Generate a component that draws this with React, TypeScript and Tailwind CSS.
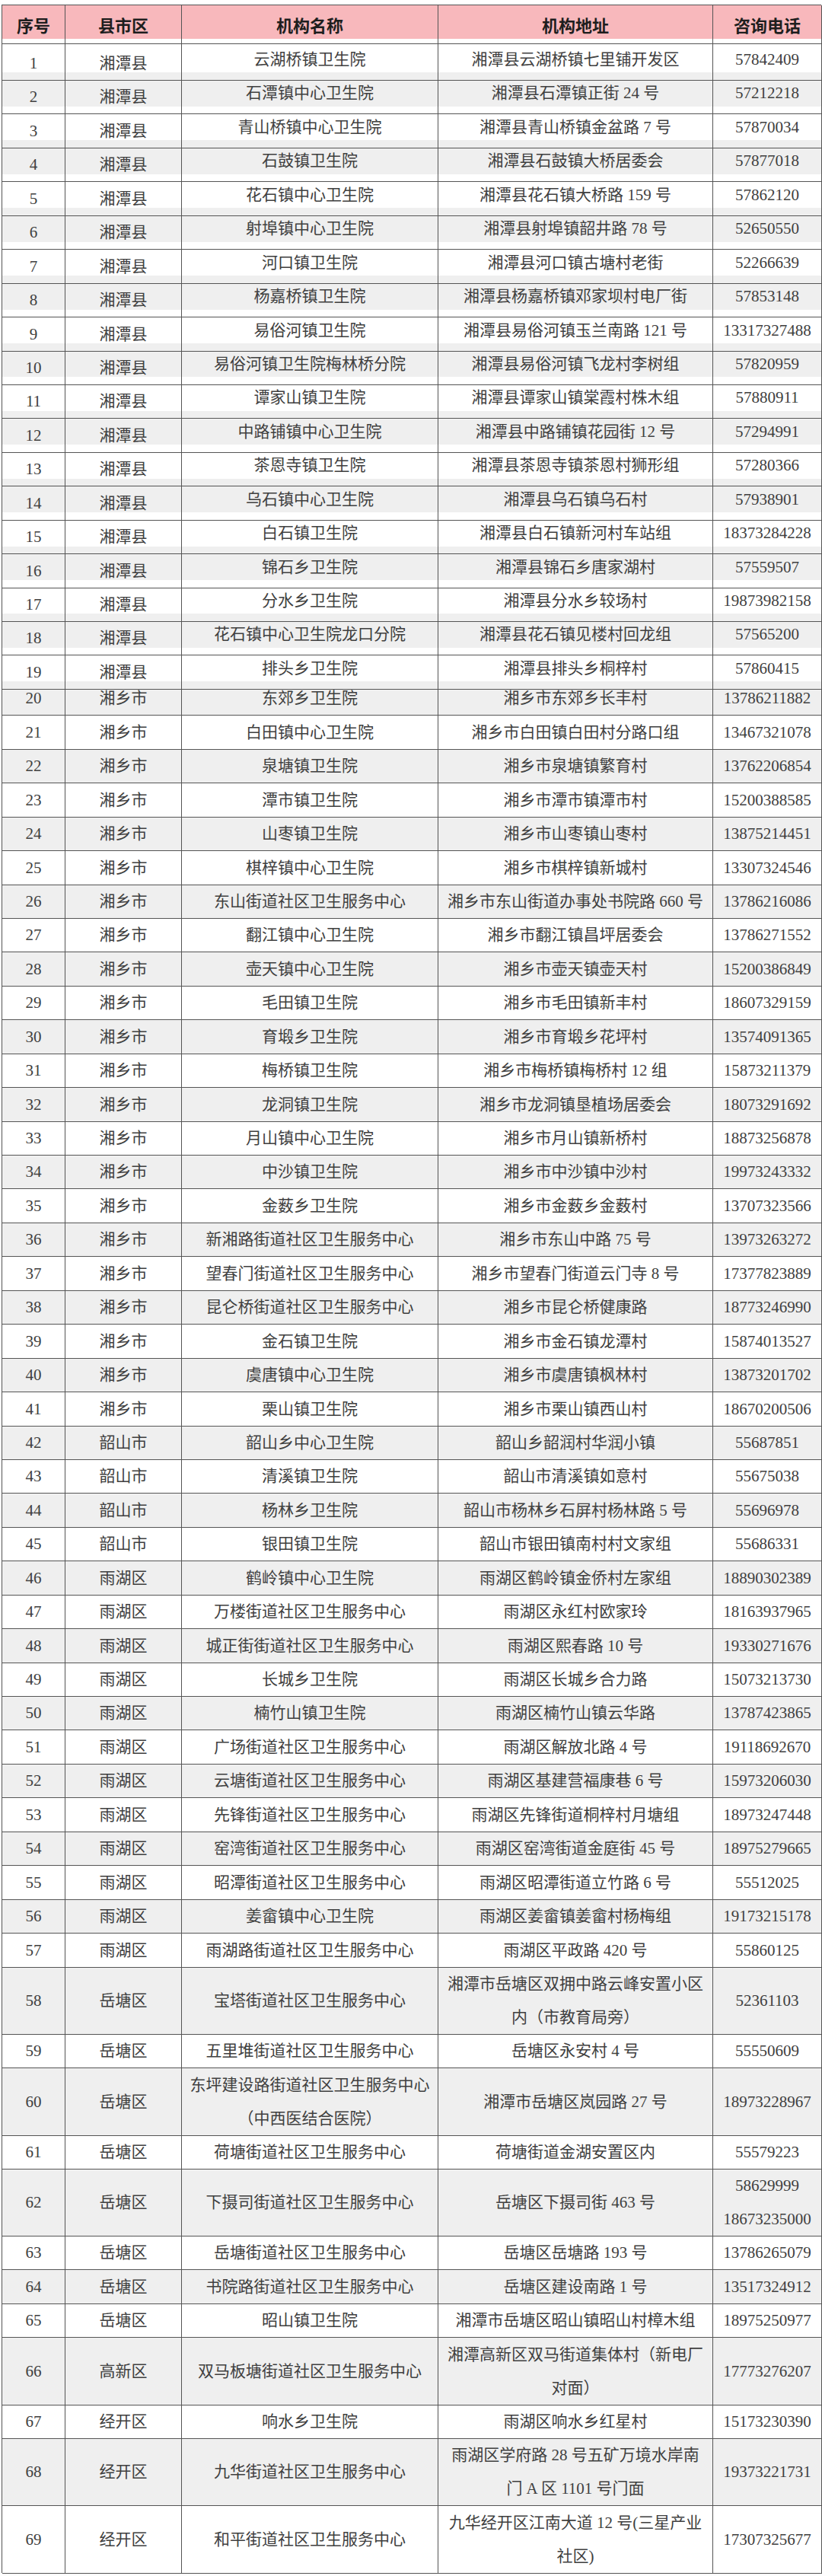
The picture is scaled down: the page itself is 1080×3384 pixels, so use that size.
import React from 'react';

type Row = [number, string, string, string, string];

// "\n" marks a line break inside a cell (those rows are double height)
const rows: Row[] = [
  [1, '湘潭县', '云湖桥镇卫生院', '湘潭县云湖桥镇七里铺开发区', '57842409'],
  [2, '湘潭县', '石潭镇中心卫生院', '湘潭县石潭镇正街 24 号', '57212218'],
  [3, '湘潭县', '青山桥镇中心卫生院', '湘潭县青山桥镇金盆路 7 号', '57870034'],
  [4, '湘潭县', '石鼓镇卫生院', '湘潭县石鼓镇大桥居委会', '57877018'],
  [5, '湘潭县', '花石镇中心卫生院', '湘潭县花石镇大桥路 159 号', '57862120'],
  [6, '湘潭县', '射埠镇中心卫生院', '湘潭县射埠镇韶井路 78 号', '52650550'],
  [7, '湘潭县', '河口镇卫生院', '湘潭县河口镇古塘村老街', '52266639'],
  [8, '湘潭县', '杨嘉桥镇卫生院', '湘潭县杨嘉桥镇邓家坝村电厂街', '57853148'],
  [9, '湘潭县', '易俗河镇卫生院', '湘潭县易俗河镇玉兰南路 121 号', '13317327488'],
  [10, '湘潭县', '易俗河镇卫生院梅林桥分院', '湘潭县易俗河镇飞龙村李树组', '57820959'],
  [11, '湘潭县', '谭家山镇卫生院', '湘潭县谭家山镇棠霞村株木组', '57880911'],
  [12, '湘潭县', '中路铺镇中心卫生院', '湘潭县中路铺镇花园街 12 号', '57294991'],
  [13, '湘潭县', '茶恩寺镇卫生院', '湘潭县茶恩寺镇茶恩村狮形组', '57280366'],
  [14, '湘潭县', '乌石镇中心卫生院', '湘潭县乌石镇乌石村', '57938901'],
  [15, '湘潭县', '白石镇卫生院', '湘潭县白石镇新河村车站组', '18373284228'],
  [16, '湘潭县', '锦石乡卫生院', '湘潭县锦石乡唐家湖村', '57559507'],
  [17, '湘潭县', '分水乡卫生院', '湘潭县分水乡较场村', '19873982158'],
  [18, '湘潭县', '花石镇中心卫生院龙口分院', '湘潭县花石镇见楼村回龙组', '57565200'],
  [19, '湘潭县', '排头乡卫生院', '湘潭县排头乡桐梓村', '57860415'],
  [20, '湘乡市', '东郊乡卫生院', '湘乡市东郊乡长丰村', '13786211882'],
  [21, '湘乡市', '白田镇中心卫生院', '湘乡市白田镇白田村分路口组', '13467321078'],
  [22, '湘乡市', '泉塘镇卫生院', '湘乡市泉塘镇繁育村', '13762206854'],
  [23, '湘乡市', '潭市镇卫生院', '湘乡市潭市镇潭市村', '15200388585'],
  [24, '湘乡市', '山枣镇卫生院', '湘乡市山枣镇山枣村', '13875214451'],
  [25, '湘乡市', '棋梓镇中心卫生院', '湘乡市棋梓镇新城村', '13307324546'],
  [26, '湘乡市', '东山街道社区卫生服务中心', '湘乡市东山街道办事处书院路 660 号', '13786216086'],
  [27, '湘乡市', '翻江镇中心卫生院', '湘乡市翻江镇昌坪居委会', '13786271552'],
  [28, '湘乡市', '壶天镇中心卫生院', '湘乡市壶天镇壶天村', '15200386849'],
  [29, '湘乡市', '毛田镇卫生院', '湘乡市毛田镇新丰村', '18607329159'],
  [30, '湘乡市', '育塅乡卫生院', '湘乡市育塅乡花坪村', '13574091365'],
  [31, '湘乡市', '梅桥镇卫生院', '湘乡市梅桥镇梅桥村 12 组', '15873211379'],
  [32, '湘乡市', '龙洞镇卫生院', '湘乡市龙洞镇垦植场居委会', '18073291692'],
  [33, '湘乡市', '月山镇中心卫生院', '湘乡市月山镇新桥村', '18873256878'],
  [34, '湘乡市', '中沙镇卫生院', '湘乡市中沙镇中沙村', '19973243332'],
  [35, '湘乡市', '金薮乡卫生院', '湘乡市金薮乡金薮村', '13707323566'],
  [36, '湘乡市', '新湘路街道社区卫生服务中心', '湘乡市东山中路 75 号', '13973263272'],
  [37, '湘乡市', '望春门街道社区卫生服务中心', '湘乡市望春门街道云门寺 8 号', '17377823889'],
  [38, '湘乡市', '昆仑桥街道社区卫生服务中心', '湘乡市昆仑桥健康路', '18773246990'],
  [39, '湘乡市', '金石镇卫生院', '湘乡市金石镇龙潭村', '15874013527'],
  [40, '湘乡市', '虞唐镇中心卫生院', '湘乡市虞唐镇枫林村', '13873201702'],
  [41, '湘乡市', '栗山镇卫生院', '湘乡市栗山镇西山村', '18670200506'],
  [42, '韶山市', '韶山乡中心卫生院', '韶山乡韶润村华润小镇', '55687851'],
  [43, '韶山市', '清溪镇卫生院', '韶山市清溪镇如意村', '55675038'],
  [44, '韶山市', '杨林乡卫生院', '韶山市杨林乡石屏村杨林路 5 号', '55696978'],
  [45, '韶山市', '银田镇卫生院', '韶山市银田镇南村村文家组', '55686331'],
  [46, '雨湖区', '鹤岭镇中心卫生院', '雨湖区鹤岭镇金侨村左家组', '18890302389'],
  [47, '雨湖区', '万楼街道社区卫生服务中心', '雨湖区永红村欧家玲', '18163937965'],
  [48, '雨湖区', '城正街街道社区卫生服务中心', '雨湖区熙春路 10 号', '19330271676'],
  [49, '雨湖区', '长城乡卫生院', '雨湖区长城乡合力路', '15073213730'],
  [50, '雨湖区', '楠竹山镇卫生院', '雨湖区楠竹山镇云华路', '13787423865'],
  [51, '雨湖区', '广场街道社区卫生服务中心', '雨湖区解放北路 4 号', '19118692670'],
  [52, '雨湖区', '云塘街道社区卫生服务中心', '雨湖区基建营福康巷 6 号', '15973206030'],
  [53, '雨湖区', '先锋街道社区卫生服务中心', '雨湖区先锋街道桐梓村月塘组', '18973247448'],
  [54, '雨湖区', '窑湾街道社区卫生服务中心', '雨湖区窑湾街道金庭街 45 号', '18975279665'],
  [55, '雨湖区', '昭潭街道社区卫生服务中心', '雨湖区昭潭街道立竹路 6 号', '55512025'],
  [56, '雨湖区', '姜畲镇中心卫生院', '雨湖区姜畲镇姜畲村杨梅组', '19173215178'],
  [57, '雨湖区', '雨湖路街道社区卫生服务中心', '雨湖区平政路 420 号', '55860125'],
  [58, '岳塘区', '宝塔街道社区卫生服务中心', '湘潭市岳塘区双拥中路云峰安置小区\n内（市教育局旁）', '52361103'],
  [59, '岳塘区', '五里堆街道社区卫生服务中心', '岳塘区永安村 4 号', '55550609'],
  [60, '岳塘区', '东坪建设路街道社区卫生服务中心\n（中西医结合医院）', '湘潭市岳塘区岚园路 27 号', '18973228967'],
  [61, '岳塘区', '荷塘街道社区卫生服务中心', '荷塘街道金湖安置区内', '55579223'],
  [62, '岳塘区', '下摄司街道社区卫生服务中心', '岳塘区下摄司街 463 号', '58629999\n18673235000'],
  [63, '岳塘区', '岳塘街道社区卫生服务中心', '岳塘区岳塘路 193 号', '13786265079'],
  [64, '岳塘区', '书院路街道社区卫生服务中心', '岳塘区建设南路 1 号', '13517324912'],
  [65, '岳塘区', '昭山镇卫生院', '湘潭市岳塘区昭山镇昭山村樟木组', '18975250977'],
  [66, '高新区', '双马板塘街道社区卫生服务中心', '湘潭高新区双马街道集体村（新电厂\n对面）', '17773276207'],
  [67, '经开区', '响水乡卫生院', '雨湖区响水乡红星村', '15173230390'],
  [68, '经开区', '九华街道社区卫生服务中心', '雨湖区学府路 28 号五矿万境水岸南\n门 A 区 1101 号门面', '19373221731'],
  [69, '经开区', '和平街道社区卫生服务中心', '九华经开区江南大道 12 号(三星产业\n社区)', '17307325677'],
];

const headers = ['序号', '县市区', '机构名称', '机构地址', '咨询电话'];

const cellBase =
  'flex items-center justify-center text-center whitespace-pre-line leading-[44px] border-r border-b border-[#555]';

export default function App() {
  return (
    <div className="w-[1080px] min-h-[3384px] bg-white pt-[6px] pl-[2px] font-['Liberation_Serif','Noto_Sans_CJK_SC',serif] text-[21px] text-[#404040]">
      <div className="w-[1077px] border-l border-t border-[#555]">
        {/* header */}
        <div className="grid grid-cols-[83px_153px_337px_361px_143px] h-[44px] bg-[#f8b8bc]">
          {headers.map((h) => (
            <div key={h} className={`${cellBase} pt-[6px] text-[22px] font-bold text-[#1e1e1e]`}>
              {h}
            </div>
          ))}
        </div>

        {rows.map((r) => {
          const [no, area, name, addr, tel] = r;
          const tall = r.some((c) => typeof c === 'string' && c.includes('\n'));
          const shade = no % 2 === 0 ? 'bg-[#efefef]' : 'bg-white';
          const low = no <= 19 ? 'pt-[10px]' : '';
          return (
            <div
              key={no}
              className={`grid grid-cols-[83px_153px_337px_361px_143px] ${tall ? 'h-[88.2px]' : 'h-[44.45px]'} ${shade}`}
            >
              <div className={`${cellBase} ${low}`}>{no}</div>
              <div className={`${cellBase} ${low}`}>{area}</div>
              <div className={cellBase}>{name}</div>
              <div className={cellBase}>{addr}</div>
              <div className={cellBase}>{tel}</div>
            </div>
          );
        })}
      </div>
    </div>
  );
}
